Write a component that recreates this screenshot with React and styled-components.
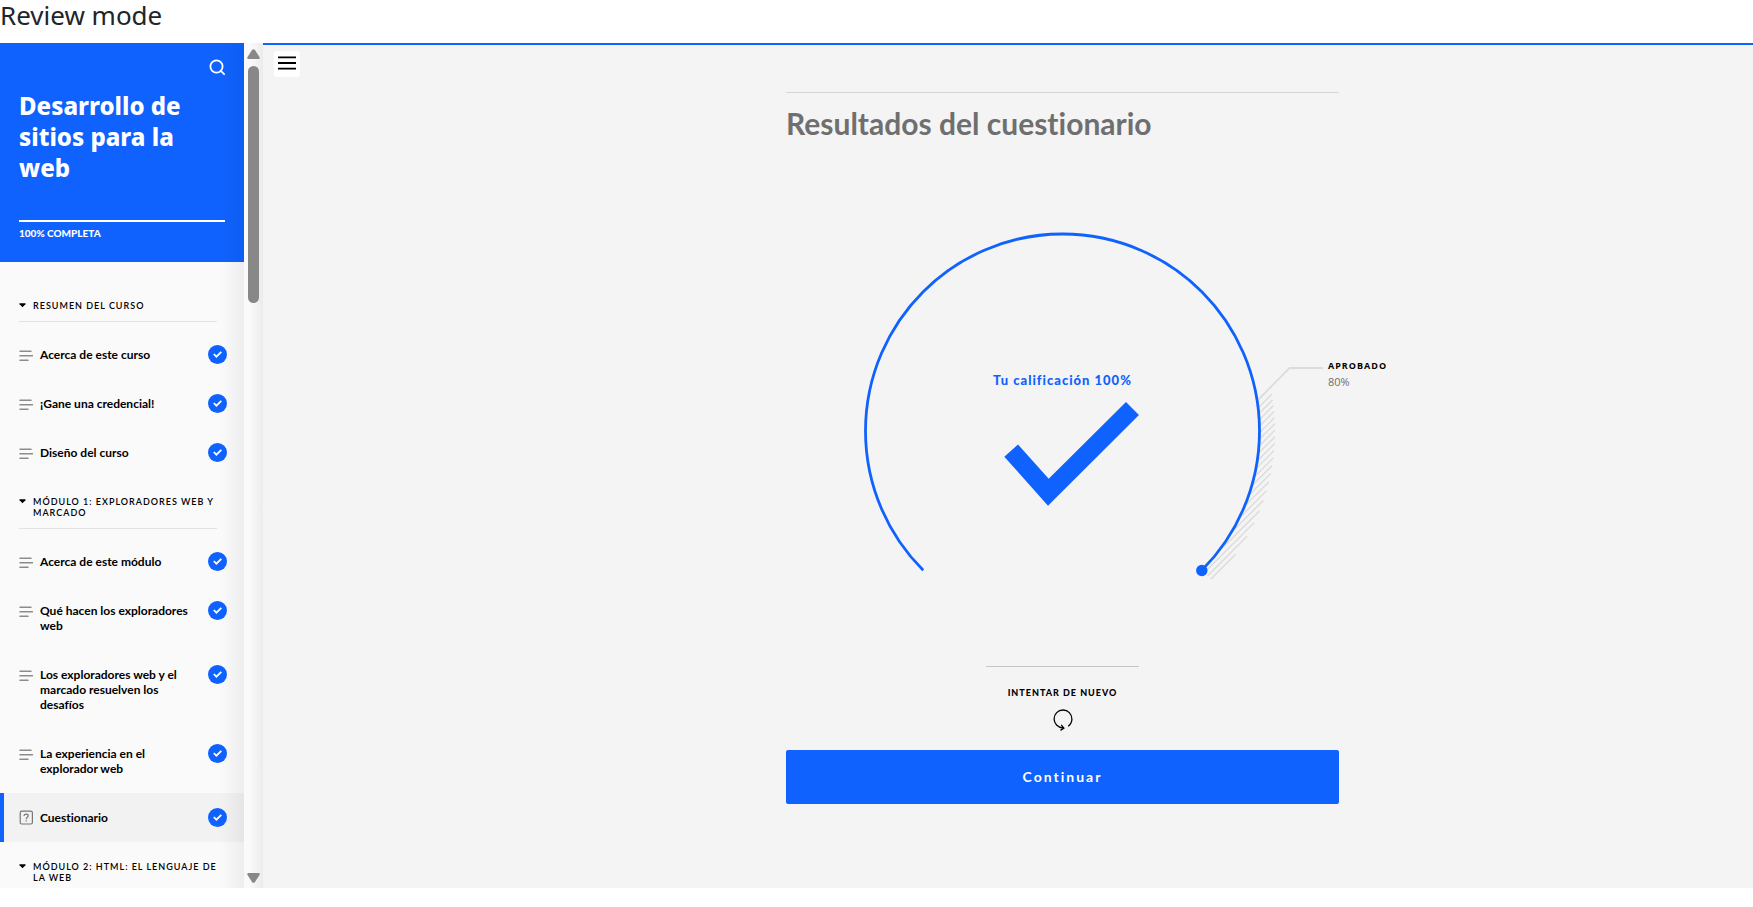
import React from 'react';
import styled, { createGlobalStyle } from 'styled-components';

const blue = '#0f62fe';
const lato = 'Lato, "Liberation Sans", sans-serif';

const GlobalStyle = createGlobalStyle`
  *, *::before, *::after { box-sizing: border-box; }
  body { margin: 0; background: #fff; color: #000; font-family: ${lato}; font-variant-ligatures: none; }
  button { font: inherit; font-variant-ligatures: none; color: inherit; border: 0; padding: 0; background: none; cursor: pointer; }
  h1, h2, h3, p, ul, figure { margin: 0; padding: 0; }
  ul { list-style: none; }
`;

const Page = styled.div`
  display: flex;
  flex-direction: column;
  height: 100vh;
  padding-bottom: 19px;
`;
const PageTitle = styled.h1`
  flex: none;
  height: 43px;
  color: #212529;
  font: 400 26px/30px "Noto Sans", "Open Sans", sans-serif;
`;
const Course = styled.div`
  display: flex;
  flex: 1;
  min-height: 0;
`;

const Sidebar = styled.aside`
  display: flex;
  flex: none;
  width: 263px;
  background: #fafafa;
`;
const SidebarContent = styled.div`
  position: relative;
  flex: 1;
  overflow: hidden;
  &::after {
    content: '';
    position: absolute;
    inset: 0 0 0 auto;
    width: 24px;
    background: linear-gradient(to right, transparent, rgba(0, 0, 0, 0.05));
    pointer-events: none;
  }
`;
const Cover = styled.header`
  display: flex;
  flex-direction: column;
  height: 219px;
  padding: 16px 19px 0;
  background: ${blue};
  color: #fff;
`;
const SearchButton = styled.button`
  align-self: flex-end;
  height: 17px;
  svg { display: block; }
`;
const CourseTitle = styled.h2`
  margin-top: 14px;
  font: 800 24px/31px "Noto Sans", "Open Sans", sans-serif;
`;
const Progress = styled.p`
  margin-top: 37px;
  padding-top: 5px;
  border-top: 2px solid #fff;
  font-size: 10px;
  font-weight: 900;
  line-height: 12px;
`;
const Outline = styled.nav`
  padding-top: 19px;
`;
const SectionToggle = styled.button`
  display: flex;
  width: 198px;
  margin: 19px 0 8px 19px;
  padding-bottom: 10px;
  border-bottom: 1px solid #e2e2e2;
  text-align: left;
  font-size: 9px;
  font-weight: 600;
  line-height: 11px;
  letter-spacing: 1px;
  svg { flex: none; margin: 3px 7px 0 0; }
`;
const Lesson = styled.a`
  display: flex;
  align-items: flex-start;
  padding: 17px 17px 17px ${p => (p.$active ? 15 : 19)}px;
  border-left: ${p => (p.$active ? `4px solid ${blue}` : '0')};
  background: ${p => (p.$active ? '#f2f2f2' : 'transparent')};
  color: #000;
  font-size: 12px;
  font-weight: 700;
  line-height: 15px;
  text-decoration: none;
  svg { flex: none; }
`;
const LessonTitle = styled.span`
  flex: 1;
  padding: 0 12px 0 7px;
`;
const Badge = styled.span`
  display: grid;
  place-items: center;
  width: 19px;
  height: 19px;
  margin: -2px 0;
  border-radius: 50%;
  background: ${blue};
`;
const Scrollbar = styled.div`
  display: flex;
  flex-direction: column;
  align-items: center;
  flex: none;
  width: 19px;
  padding: 6px 0 5px;
  background: linear-gradient(to right, #fafafa 30%, #ebebeb);
`;
const Thumb = styled.div`
  width: 11px;
  height: 237px;
  margin: 7px 0 auto;
  border-radius: 6px;
  background: #888;
`;

const Main = styled.main`
  display: flex;
  flex: 1;
  align-items: flex-start;
  min-width: 0;
  padding: 0 0 0 11px;
  border-top: 2px solid ${blue};
  background: #f4f4f4;
`;
const MenuButton = styled.button`
  display: grid;
  place-items: center;
  flex: none;
  width: 26px;
  height: 26px;
  margin: 6px 72px 0 0;
  padding-bottom: 2px;
  border-radius: 3px;
  background: #fff;
`;
const Results = styled.section`
  display: flex;
  flex-direction: column;
  align-items: center;
  width: 553px;
  margin: 47px auto 0;
`;
const ResultsTitle = styled.h2`
  width: 100%;
  padding-top: 12px;
  border-top: 1px solid #d6d6d6;
  color: #6f6f6f;
  font-size: 30px;
  font-weight: 700;
  line-height: 36px;
`;
const Gauge = styled.figure`
  position: relative;
  width: 553px;
  margin-top: 90px;
  svg { display: block; overflow: visible; }
`;
const Score = styled.p`
  position: absolute;
  top: 140px;
  left: 0;
  right: 0;
  color: ${blue};
  font-size: 13px;
  font-weight: 900;
  line-height: 18px;
  letter-spacing: 1px;
  text-align: center;
`;
const PassMark = styled.p`
  position: absolute;
  top: 127px;
  left: 542px;
  color: #6f6f6f;
  font: 400 11px/16px "Open Sans", sans-serif;
`;
const PassLabel = styled.strong`
  display: block;
  color: #000;
  font-size: 9px;
  font-weight: 700;
  letter-spacing: 1px;
`;
const Retry = styled.button`
  display: flex;
  flex-direction: column;
  align-items: center;
  width: 153px;
  margin-top: 85px;
  padding-top: 19px;
  border-top: 1px solid #c6c6c6;
  font-size: 9px;
  font-weight: 900;
  line-height: 14px;
  letter-spacing: 1px;
  svg { margin-top: 9px; }
`;
const Continue = styled.button`
  width: 100%;
  height: 54px;
  margin-top: 19px;
  padding-bottom: 2px;
  border-radius: 2px;
  background: ${blue};
  color: #fff;
  font-size: 14px;
  font-weight: 700;
  letter-spacing: 2px;
`;

const SearchIcon = () => (
  <svg width="16" height="17" viewBox="0 0 16 17" fill="none" stroke="#fff" strokeWidth="1.8">
    <circle cx="7.5" cy="7.5" r="6.1" />
    <path d="m11.8 11.8 3.3 3.4" strokeLinecap="round" />
  </svg>
);
const TextIcon = () => (
  <svg width="14" height="15" viewBox="0 0 14 15" stroke="#8c8c8c" strokeWidth="1.5" strokeLinecap="round">
    <path d="M1 4.2h11M1 8.7h12.5M1 13.2h8" />
  </svg>
);
const QuizIcon = () => (
  <svg width="14" height="15" viewBox="0 0 14 15" fill="none" stroke="#777" strokeWidth="1.2">
    <rect x="1.2" y="1.2" width="12.2" height="12.8" rx="1.5" />
    <path d="M5.1 6V5.7C5.1 3.5 9.2 3.5 9.2 5.8C9.2 7.3 7.2 7.2 7.2 9.2M7.2 10.2v1.4" />
  </svg>
);
const CaretIcon = () => (
  <svg width="7" height="5" viewBox="0 0 7 5"><path d="M.4.3h6.2L6.4 1.2 3.5 4.3.6 1.2Z" /></svg>
);
const CheckIcon = () => (
  <svg width="9" height="7" viewBox="0 0 9 7" fill="none" stroke="#fff" strokeWidth="1.8">
    <path d="m.8 3 2.6 2.7L8.3.9" />
  </svg>
);
const MenuIcon = () => (
  <svg width="18" height="14" viewBox="0 0 18 14" stroke="#000" strokeWidth="1.8"><path d="M0 1.4h18M0 7h18M0 12.6h18" /></svg>
);
const ArrowIcon = ({ down }) => (
  <svg width="13" height="10" viewBox="0 0 13 10" fill="#888">
    <path d={down ? 'M1.2 0h10.6q1.5.4.8 1.7L8 8.9Q6.5 10.6 5 8.9L.4 1.7Q-.3.4 1.2 0Z' : 'M1.2 10h10.6q1.5-.4.8-1.7L8 1.1Q6.5-.6 5 1.1L.4 8.3Q-.3 9.6 1.2 10Z'} />
  </svg>
);
const RetryIcon = () => (
  <svg width="20" height="22" viewBox="0 0 20 22" fill="none" stroke="#000" strokeWidth="1.3">
    <path d="M15.2 17.2C17.5 15.6 18.9 13 18.9 10C18.9 4.9 15 1 10 1S1.1 4.9 1.1 10C1.1 14.5 4.6 18.5 10.2 19M8.2 15.8l2.7 3.3-3.4 2.3" />
  </svg>
);

const CENTER = { x: 276.5, y: 200 };
const RADIUS = 197;
const HATCH_RADIUS = 212.5;

const hatchPath = Array.from({ length: 20 }, (_, k) => {
  const sum = 172.5 + k * 6.52;
  const reach = r => Math.sqrt(Math.max(0, 2 * r * r - sum * sum));
  const point = d => `${CENTER.x + (sum + d) / 2} ${CENTER.y + (sum - d) / 2}`;
  return `M${point(reach(RADIUS))}L${point(reach(HATCH_RADIUS))}`;
}).join('');

const GaugeDrawing = () => (
  <svg width="553" height="350" viewBox="0 0 553 350" fill="none" aria-hidden="true">
    <path d={hatchPath} stroke="#dadada" strokeWidth="1.3" />
    <path d="M473 168 503.5 137H537" stroke="#dcdcdc" strokeWidth="1.8" />
    <path d={`M137.2 339.3A${RADIUS} ${RADIUS} 0 1 1 415.8 339.3`} stroke={blue} strokeWidth="2.8" />
    <circle cx="415.8" cy="339.5" r="5.7" fill={blue} />
    <path d="M218.3 225.7 232 213.5 262.7 247.7 340 171 353 184 262 274.7Z" fill={blue} />
  </svg>
);

const sections = [
  { title: 'RESUMEN DEL CURSO', lessons: ['Acerca de este curso', '¡Gane una credencial!', 'Diseño del curso'] },
  {
    title: 'MÓDULO 1: EXPLORADORES WEB Y MARCADO',
    lessons: [
      'Acerca de este módulo',
      'Qué hacen los exploradores web',
      'Los exploradores web y el marcado resuelven los desafíos',
      'La experiencia en el explorador web',
      'Cuestionario',
    ],
  },
  { title: 'MÓDULO 2: HTML: EL LENGUAJE DE LA WEB', lessons: [] },
];

export default function App() {
  return (
    <Page>
      <GlobalStyle />
      <PageTitle>Review mode</PageTitle>
      <Course>
        <Sidebar>
          <SidebarContent>
            <Cover>
              <SearchButton aria-label="Buscar"><SearchIcon /></SearchButton>
              <CourseTitle>Desarrollo de sitios para la web</CourseTitle>
              <Progress>100% COMPLETA</Progress>
            </Cover>
            <Outline>
              {sections.map(section => (
                <React.Fragment key={section.title}>
                  <SectionToggle aria-expanded="true"><CaretIcon />{section.title}</SectionToggle>
                  <ul>
                    {section.lessons.map(title => {
                      const active = title === 'Cuestionario';
                      return (
                        <li key={title}>
                          <Lesson href="#" $active={active}>
                            {active ? <QuizIcon /> : <TextIcon />}
                            <LessonTitle>{title}</LessonTitle>
                            <Badge><CheckIcon /></Badge>
                          </Lesson>
                        </li>
                      );
                    })}
                  </ul>
                </React.Fragment>
              ))}
            </Outline>
          </SidebarContent>
          <Scrollbar aria-hidden="true"><ArrowIcon /><Thumb /><ArrowIcon down /></Scrollbar>
        </Sidebar>
        <Main>
          <MenuButton aria-label="Menú"><MenuIcon /></MenuButton>
          <Results>
            <ResultsTitle>Resultados del cuestionario</ResultsTitle>
            <Gauge>
              <GaugeDrawing />
              <Score>Tu calificación 100%</Score>
              <PassMark><PassLabel>APROBADO</PassLabel>80%</PassMark>
            </Gauge>
            <Retry>INTENTAR DE NUEVO<RetryIcon /></Retry>
            <Continue>Continuar</Continue>
          </Results>
        </Main>
      </Course>
    </Page>
  );
}
